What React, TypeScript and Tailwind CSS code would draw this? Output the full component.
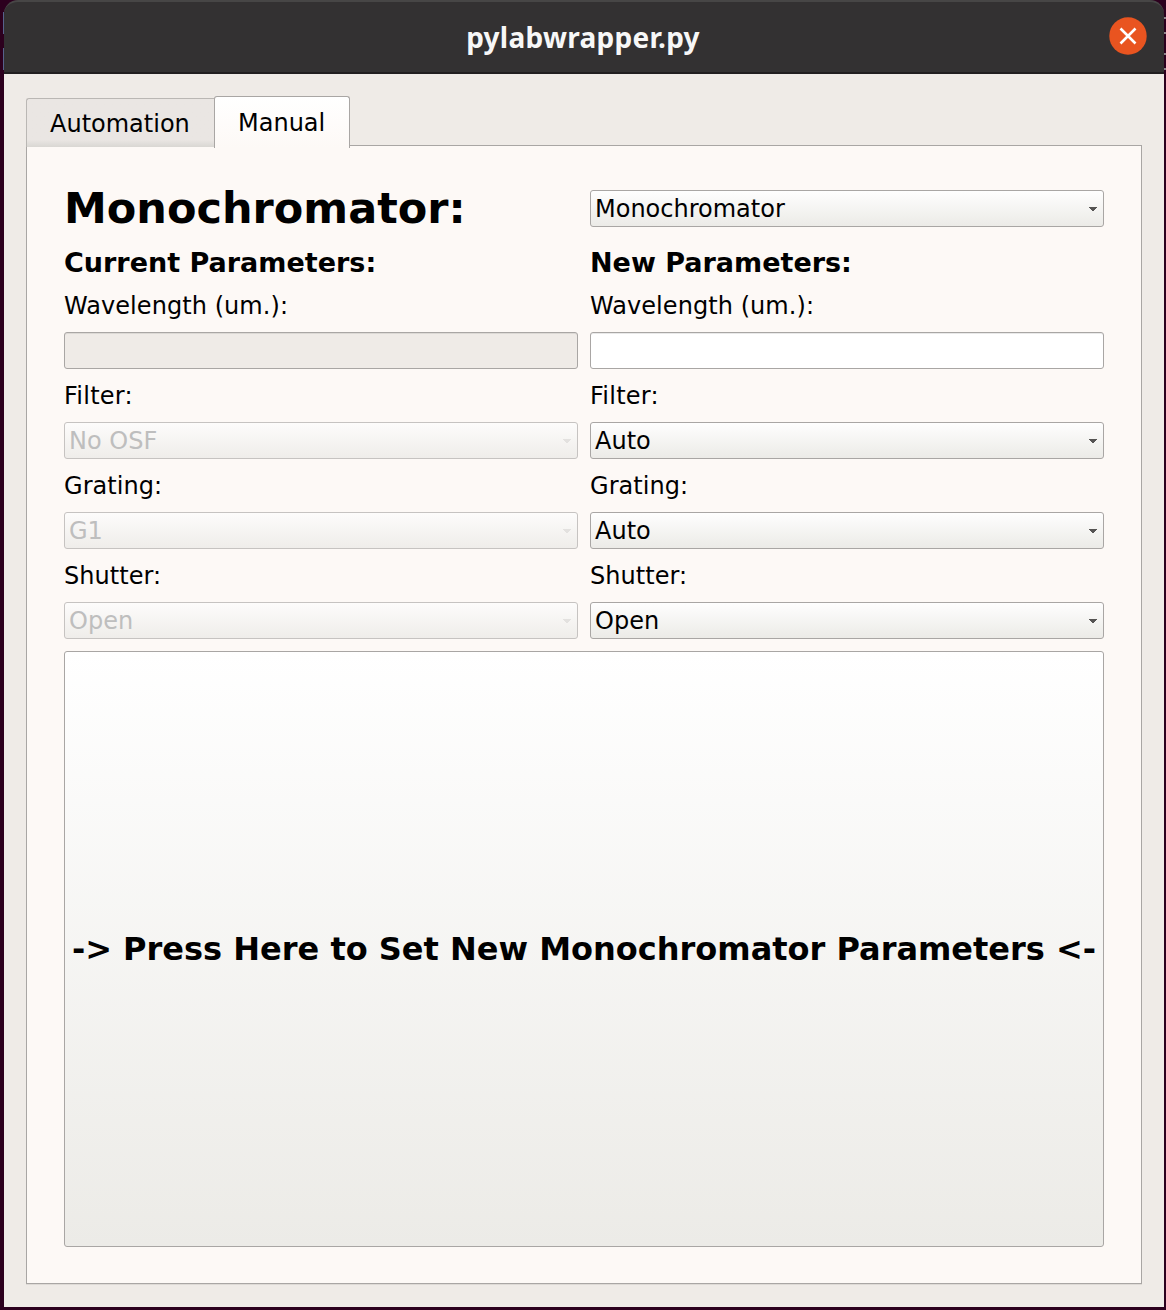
import React from "react";

function Arrow({ disabled }: { disabled?: boolean }) {
  return (
    <svg width="8" height="4" viewBox="0 0 8 4" className="mt-px" shapeRendering="crispEdges">
      <path d="M0 0H8V1H7V2H6V3H5V4H3V3H2V2H1V1H0Z" fill={disabled ? "#e3e1df" : "#555453"} />
    </svg>
  );
}

function Combo({ value, disabled }: { value: string; disabled?: boolean }) {
  return (
    <div
      className={
        "flex h-[37px] items-center justify-between rounded-[3px] border bg-linear-to-b pr-[6px] pl-1 leading-7 " +
        (disabled
          ? "border-[#c6c3c1] from-[#fdfcfb] to-[#efedea] text-[#bebebe]"
          : "border-[#a9a6a4] from-[#fefefe] to-[#ecebe7] text-black")
      }
    >
      <span className="pt-px">{value}</span>
      <Arrow disabled={disabled} />
    </div>
  );
}

function Label({ children, wide }: { children: React.ReactNode; wide?: boolean }) {
  return <div className={"h-[29px] leading-[30px] " + (wide ? "tracking-[0.25px]" : "tracking-[0.06px]")}>{children}</div>;
}

const rows = [
  { label: "Filter:", current: "No OSF", next: "Auto" },
  { label: "Grating:", current: "G1", next: "Auto" },
  { label: "Shutter:", current: "Open", next: "Open" },
];

export default function App() {
  return (
    <div className="flex h-[1310px] w-[1166px] flex-col bg-[#2c001e] pr-[2px] pb-[3px] pl-1 font-['DejaVu_Sans',sans-serif] text-[24px] text-black">
      <header className="relative flex h-[74px] shrink-0 items-center justify-center rounded-t-[14px] border-t-2 border-b-2 border-t-[#474646] border-b-[#211e20] bg-[#333132]">
        <h1 className="mr-[2px] pb-px font-['Noto_Sans',sans-serif] text-[28px] leading-9 font-bold tracking-[0.3px] text-[#f7f7f7]">
          pylabwrapper.py
        </h1>
        <button aria-label="Close" className="absolute top-[15px] right-[17px] h-[38px] w-[38px]">
          <svg width="38" height="38" viewBox="0 0 38 38">
            <circle cx="19" cy="19" r="18.7" fill="#e95420" />
            <path d="M11.5 11.5L26.5 26.5M26.5 11.5L11.5 26.5" stroke="white" strokeWidth="2.6" />
          </svg>
        </button>
        <div className="absolute top-[10px] -left-px h-[22px] w-px bg-[#56618c]" />
        <div className="absolute top-[46px] -left-px h-[22px] w-px bg-[#56618c]" />
        <div className="absolute top-[15px] -right-[2px] h-[17px] w-[2px] border-y-2 border-[#8c828a]" />
        <div className="absolute top-[51px] -right-[2px] h-[17px] w-[2px] border-y-2 border-[#8c828a]" />
      </header>
      <main className="flex flex-1 flex-col bg-[#efebe7] px-[22px] pt-[22px] pb-[23px]">
        <nav className="relative z-10 -mb-[3px] flex h-[52px] items-start">
          <div className="mt-[2px] h-[49px] w-[188px] rounded-tl-[3px] border-t border-l border-[#bab7b4] bg-linear-to-b from-[#eae6e3] from-85% to-[#d9d7d3] pl-[23px] leading-[50px]">
            Automation
          </div>
          <div className="h-[52px] w-[136px] rounded-t-[3px] border-x border-t border-[#a9a6a4] bg-linear-to-b from-white to-[#fdf9f6] pl-[23px] leading-[52px]">
            Manual
          </div>
        </nav>
        <section className="flex flex-1 flex-col gap-3 border border-[#a9a6a4] bg-[#fdf9f6] px-[37px] pt-[37px] pb-[36px] shadow-[0_1px_0_#dedad6]">
          <div className="grid grid-cols-2 gap-3">
            <h2 className="h-[52px] text-[43px] leading-[50px] font-bold">Monochromator:</h2>
            <div className="pt-[7px]">
              <Combo value="Monochromator" />
            </div>
            <h3 className="h-8 text-[27px] leading-[31px] font-bold">Current Parameters:</h3>
            <h3 className="h-8 text-[27px] leading-[31px] font-bold">New Parameters:</h3>
            <Label>Wavelength (um.):</Label>
            <Label>Wavelength (um.):</Label>
            <div className="h-[37px] rounded-[3px] border border-[#a9a6a4] bg-[#efebe7] shadow-[inset_0_1px_0_#dcd9d5]" />
            <div className="h-[37px] rounded-[3px] border border-[#a9a6a4] bg-white shadow-[inset_0_1px_0_#e9e9e9]" />
            {rows.map((r) => (
              <React.Fragment key={r.label}>
                <Label wide={r.label === "Filter:"}>{r.label}</Label>
                <Label wide={r.label === "Filter:"}>{r.label}</Label>
                <Combo value={r.current} disabled />
                <Combo value={r.next} />
              </React.Fragment>
            ))}
          </div>
          <button className="flex-1 rounded-[3px] border border-[#a9a6a4] bg-linear-to-b from-white to-[#ecebe7] text-[32px] font-bold whitespace-nowrap">
            -&gt; Press Here to Set New Monochromator Parameters &lt;-
          </button>
        </section>
      </main>
    </div>
  );
}
